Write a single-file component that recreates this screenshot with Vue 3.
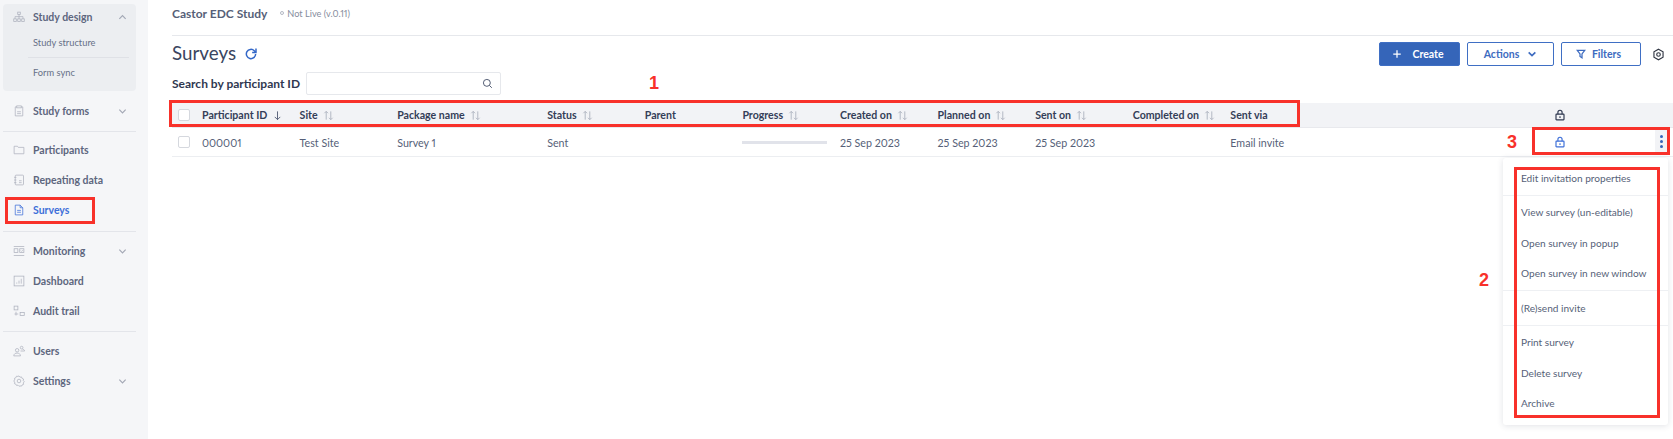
<template>
  <div class="page">
    <aside class="sidebar">
      <div class="group">
        <div class="nav-item head">
          <svg class="icon" viewBox="0 0 16 16" v-html="icons.tree"></svg>
          <span class="label">Study design</span>
          <svg class="chev" viewBox="0 0 10 6"><path d="M1.500 5 5 1.500 8.500 5" /></svg>
        </div>
        <div class="sub-item">Study structure</div>
        <div class="sub-line"></div>
        <div class="sub-item">Form sync</div>
      </div>

      <template v-for="(section, i) in navSections" :key="i">
        <div v-if="i > 0" class="nav-line" :class="`line-${i}`"></div>
        <div
          v-for="item in section"
          :key="item.name"
          class="nav-item"
          :class="{ active: item.name === 'Surveys' }"
        >
          <svg class="icon" viewBox="0 0 16 16" v-html="icons[item.icon]"></svg>
          <span class="label">{{ item.name }}</span>
          <svg v-if="item.more" class="chev" viewBox="0 0 10 6"><path d="M1.500 1.500 5 5 8.500 1.500" /></svg>
        </div>
      </template>
    </aside>

    <main class="main">
      <div class="topbar">
        <span class="study">Castor EDC Study</span>
        <span class="live"><i class="live-dot"></i>Not Live (v.0.11)</span>
      </div>

      <div class="title-row">
        <h1>Surveys</h1>
        <svg class="refresh" viewBox="0 0 16 16"><path d="M13.300 8a5.300 5.300 0 1 1-1.600-3.800L13.500 6" /><path d="M13.700 1.800v4.400H9.300" /></svg>
        <div class="actions">
          <button class="btn primary">
            <svg viewBox="0 0 12 12"><path d="M6 1.500v9M1.500 6h9" /></svg>
            Create
          </button>
          <button class="btn actions-btn">
            Actions
            <svg class="thick" viewBox="0 0 12 12"><path d="M2 4l4 4 4-4" /></svg>
          </button>
          <button class="btn filters-btn">
            <svg viewBox="0 0 12 12"><path d="M1.500 1.500h9L7.200 6v4.500L4.800 9V6z" /></svg>
            Filters
          </button>
          <svg class="gear" viewBox="0 0 16 16">
            <path d="M8 1.500l5.600 3.200v6.600L8 14.500l-5.600-3.200V4.700z" />
            <circle cx="8" cy="8" r="2.200" />
          </svg>
        </div>
      </div>

      <div class="search-row">
        <label>Search by participant ID</label>
        <div class="search-box">
          <svg viewBox="0 0 14 14"><circle cx="6.200" cy="6.200" r="4.400" /><path d="M9.500 9.500l3 3" /></svg>
        </div>
      </div>

      <div class="table">
        <div class="tr thead">
          <div class="check-cell"><span class="check"></span></div>
          <div v-for="col in columns" :key="col.name" class="cell">
            {{ col.name }}
            <svg v-if="col.sort === 'down'" class="sort active-sort" viewBox="0 0 12 12"><path d="M6 1.500v9M3 7.500l3 3 3-3" /></svg>
            <svg v-else-if="col.sort" class="sort" viewBox="0 0 12 12"><path d="M3.500 10.500v-9M1.500 3.500l2-2 2 2M8.500 1.500v9M6.500 8.500l2 2 2-2" /></svg>
          </div>
          <div class="lock-cell">
            <svg class="lock" viewBox="0 0 12 14" v-html="lockIcon"></svg>
          </div>
        </div>
        <div class="tr tbody">
          <div class="check-cell"><span class="check"></span></div>
          <div v-for="(value, i) in rowValues" :key="i" class="cell">
            <div v-if="value === 'progress'" class="progress"></div>
            <template v-else>{{ value }}</template>
          </div>
          <div class="lock-cell">
            <svg class="lock blue" viewBox="0 0 12 14" v-html="lockIcon"></svg>
            <div class="dots"><i></i><i></i><i></i></div>
          </div>
        </div>
      </div>
    </main>

    <div class="menu">
      <template v-for="(group, i) in menuGroups" :key="i">
        <div v-if="i > 0" class="menu-line"></div>
        <div class="menu-group">
          <div v-for="entry in group" :key="entry" class="menu-item">{{ entry }}</div>
        </div>
      </template>
    </div>

    <div class="mark mark-surveys"></div>
    <div class="mark mark-header"></div>
    <div class="mark mark-lock"></div>
    <div class="mark mark-menu"></div>
    <span class="num num-1">1</span>
    <span class="num num-2">2</span>
    <span class="num num-3">3</span>
  </div>
</template>

<script setup>
const icons = {
  tree: '<rect x="6.300" y="1.500" width="3.400" height="3" /><rect x="1" y="10.500" width="3.400" height="3.500" /><rect x="6.300" y="10.500" width="3.400" height="3.500" /><rect x="11.600" y="10.500" width="3.400" height="3.500" /><path d="M8 4.500v6M2.700 10.500V7.500h10.600v3" />',
  forms: '<path d="M5 2.500H3v12h10v-12h-2" /><rect x="5" y="1.200" width="6" height="2.600" /><path d="M5.500 9h5M5.500 11.500h5" />',
  folder: '<path d="M1.500 3h4.500l1 1.500h7.500v8.500h-13z" />',
  repeating: '<rect x="3" y="1.500" width="11" height="13" rx="1" /><path d="M1.500 4.500h3M1.500 8h3M1.500 11.500h3M8 9h3.500M8 11.500h3.500" />',
  survey: '<path d="M3 1.500h6.500l3.500 3.500v9.500H3z" /><path d="M9.500 1.500V5H13M5.500 8.500h5M5.500 11h5" />',
  monitoring: '<path d="M1 2h14M1 14h14" /><rect x="1.500" y="5" width="5" height="5" /><rect x="9" y="5" width="5.500" height="5" /><path d="M10.500 7.500l1 1 1.500-1.500" />',
  dashboard: '<rect x="1.500" y="1.500" width="13" height="13" /><path d="M5 11.500v-1.500M8 11.500v-4M11 11.500v-6.500" />',
  audit: '<rect x="1.500" y="1.500" width="5" height="5" /><path d="M4 9v5M2 12h5" /><rect x="9.500" y="10" width="5.500" height="4" />',
  users: '<circle cx="5.500" cy="7" r="2.300" /><path d="M1 14.500c.4-2.800 2-3.700 4.500-3.700s4.100.9 4.500 3.700z" /><circle cx="11.500" cy="3.500" r="1.800" /><path d="M10 8h5.500c-.2-1.500-1.200-2.200-2.700-2.200" />',
  settings: '<path d="M8 1.200l1.300 1.700 2.100-.3.700 2 2 .8-.4 2.100 1.400 1.500-1.400 1.500.4 2-2 .8-.7 1.500-2.100-.2L8 15l-1.300-1.400-2.100.2-.7-1.500-2-.8.4-2L.900 8l1.400-1.500-.4-2.100 2-.8.700-2 2.100.3z" /><circle cx="8" cy="8" r="2.400" />',
}

const lockIcon = '<path d="M3.500 6V3.800a2.500 2.500 0 0 1 5 0V6" /><rect x="1.200" y="6" width="9.600" height="6.800" rx=".6" /><path d="M6 8.500v2" />'

const navSections = [
  [{ name: 'Study forms', icon: 'forms', more: true }],
  [
    { name: 'Participants', icon: 'folder' },
    { name: 'Repeating data', icon: 'repeating' },
    { name: 'Surveys', icon: 'survey' },
  ],
  [
    { name: 'Monitoring', icon: 'monitoring', more: true },
    { name: 'Dashboard', icon: 'dashboard' },
    { name: 'Audit trail', icon: 'audit' },
  ],
  [
    { name: 'Users', icon: 'users' },
    { name: 'Settings', icon: 'settings', more: true },
  ],
]

const columns = [
  { name: 'Participant ID', sort: 'down' },
  { name: 'Site', sort: true },
  { name: 'Package name', sort: true },
  { name: 'Status', sort: true },
  { name: 'Parent' },
  { name: 'Progress', sort: true },
  { name: 'Created on', sort: true },
  { name: 'Planned on', sort: true },
  { name: 'Sent on', sort: true },
  { name: 'Completed on', sort: true },
  { name: 'Sent via' },
]

const rowValues = [
  '000001', 'Test Site', 'Survey 1', 'Sent', '', 'progress',
  '25 Sep 2023', '25 Sep 2023', '25 Sep 2023', '', 'Email invite',
]

const menuGroups = [
  ['Edit invitation properties'],
  ['View survey (un-editable)', 'Open survey in popup', 'Open survey in new window'],
  ['(Re)send invite'],
  ['Print survey', 'Delete survey', 'Archive'],
]
</script>

<style>
html, body {
  margin: 0;
  background: #fff;
}
</style>

<style scoped>
.page {
  position: relative;
  display: flex;
  width: 1673px;
  height: 439px;
  overflow: hidden;
  font-family: Lato, "Liberation Sans", sans-serif;
  font-variant-numeric: proportional-nums;
  color: #3f4a63;
}

.sidebar {
  width: 148px;
  flex: none;
  box-sizing: border-box;
  padding: 4px 12px 0 3px;
  background: #f5f6f8;
}

.group {
  height: 87px;
  margin-bottom: 5px;
  background: #eceef1;
  border-radius: 4px;
}

.nav-item {
  display: flex;
  align-items: center;
  height: 30px;
  padding-left: 10px;
  font-size: 10.500px;
  font-weight: 700;
  color: #5d667e;
}
.nav-item.head {
  height: 26px;
}
.nav-item.active {
  color: #3d6fd8;
}
.nav-item.active .icon {
  stroke: #3d6fd8;
}

.icon {
  width: 12px;
  height: 12px;
  flex: none;
  fill: none;
  stroke: #adb1bd;
  stroke-width: 1;
  margin-right: 8px;
}
.label {
  flex: 1;
}
.chev {
  width: 9px;
  height: 6px;
  margin-right: 9px;
  fill: none;
  stroke: #a3a8b5;
  stroke-width: 1.300;
}

.sub-item {
  height: 26px;
  line-height: 26px;
  padding-left: 30px;
  font-size: 9.300px;
  color: #667087;
}
.sub-line {
  height: 1px;
  margin: 1px 7px 2px 25px;
  background: #dfe1e6;
}

.nav-line {
  height: 1px;
  margin: 5px 0 4px;
  background: #e3e5ea;
}
.nav-line.line-1 {
  margin: 5px 0 3px;
}
.nav-line.line-2 {
  margin: 6px 0 4px;
}

.main {
  flex: 1;
  min-width: 0;
  padding-left: 24px;
}

.topbar {
  display: flex;
  align-items: center;
  height: 26px;
  padding-bottom: 9px;
  border-bottom: 1px solid #e6e8ec;
}
.study {
  font-size: 12px;
  font-weight: 700;
  color: #565f78;
}
.live {
  display: flex;
  align-items: center;
  margin-left: 13px;
  font-size: 9.200px;
  color: #858c9d;
}
.live-dot {
  width: 2px;
  height: 2px;
  margin-right: 3px;
  border: 1px solid #b4b9c4;
  border-radius: 50%;
}

.title-row {
  display: flex;
  align-items: center;
  height: 36px;
}
h1 {
  margin: -3px 0 0;
  font-size: 18.800px;
  font-weight: 400;
  color: #3a4560;
}
.refresh {
  width: 14px;
  height: 14px;
  margin-left: 8px;
  fill: none;
  stroke: #3468c8;
  stroke-width: 1.700;
}
.actions {
  display: flex;
  align-items: center;
  gap: 7px;
  margin-left: auto;
  padding-right: 8px;
}
.btn {
  display: flex;
  align-items: center;
  justify-content: center;
  height: 24px;
  box-sizing: border-box;
  border: 1px solid #3f6fc4;
  border-radius: 2px;
  background: #fff;
  color: #3d6bc0;
  font-family: inherit;
  font-size: 10.500px;
  font-weight: 700;
  padding: 0;
}
.btn svg {
  width: 10px;
  height: 10px;
  fill: none;
  stroke: currentColor;
  stroke-width: 1.500;
}
.btn svg.thick {
  stroke-width: 2;
}
.btn.primary {
  width: 81px;
  gap: 10px;
  padding-right: 3px;
  background: #3565b9;
  color: #fff;
}
.actions-btn {
  width: 87px;
  gap: 8px;
}
.filters-btn {
  width: 80px;
  gap: 6px;
  padding-right: 5px;
}
.gear {
  width: 13px;
  height: 13px;
  margin-left: 4px;
  fill: none;
  stroke: #2f3542;
  stroke-width: 1.400;
}

.search-row {
  display: flex;
  align-items: center;
  height: 23px;
  margin-bottom: 8px;
}
.search-row label {
  width: 134px;
  font-size: 12px;
  font-weight: 700;
  color: #2f3850;
}
.search-box {
  display: flex;
  align-items: center;
  justify-content: flex-end;
  width: 195px;
  height: 23px;
  box-sizing: border-box;
  padding-right: 7px;
  border: 1px solid #e6e8ec;
  border-radius: 2px;
}
.search-box svg {
  width: 11px;
  height: 11px;
  fill: none;
  stroke: #48536b;
  stroke-width: 1.200;
}

.tr {
  display: grid;
  grid-template-columns: 30px 97.600px 97.600px 150px repeat(6, 97.600px) 97.600px 304px 1fr;
  align-items: center;
}
.thead {
  height: 24px;
  background: #f2f3f6;
  border-bottom: 1px solid #e8e9ed;
  font-size: 10.600px;
  font-weight: 700;
  color: #343e58;
}
.tbody {
  height: 28px;
  border-bottom: 1px solid #eceef1;
  font-size: 10.700px;
  color: #565f78;
}
.check-cell {
  display: flex;
  padding-left: 6px;
}
.check {
  width: 12px;
  height: 12px;
  box-sizing: border-box;
  border: 1px solid #d5d8de;
  border-radius: 2px;
  background: #fff;
}
.cell {
  display: flex;
  align-items: center;
  white-space: nowrap;
}
.sort {
  width: 11px;
  height: 11px;
  margin-left: 5px;
  fill: none;
  stroke: #adb2be;
  stroke-width: 1;
}
.active-sort {
  stroke: #505a72;
}
.progress {
  width: 85px;
  height: 3px;
  background: #e1e3ea;
}

.lock-cell {
  position: relative;
  height: 100%;
  display: flex;
  align-items: center;
  padding-left: 21px;
}
.lock {
  width: 10px;
  height: 12px;
  fill: none;
  stroke: #2f3850;
  stroke-width: 1.400;
}
.lock.blue {
  stroke: #3d6fd8;
}
.dots {
  position: absolute;
  right: 6px;
  top: 0;
  bottom: 1px;
  width: 12px;
  display: flex;
  flex-direction: column;
  align-items: center;
  justify-content: center;
  gap: 2px;
  background: #f2f3f6;
}
.dots i {
  width: 3px;
  height: 3px;
  border-radius: 50%;
  background: #3565b9;
}

.menu {
  position: absolute;
  left: 1503px;
  top: 158px;
  width: 165px;
  height: 267px;
  box-sizing: border-box;
  background: #fff;
  border-radius: 3px;
  box-shadow: 0 1px 6px rgba(40, 50, 80, 0.14);
  font-size: 10.100px;
  color: #565f78;
}
.menu-group {
  padding: 1.500px 0;
}
.menu-group:first-child {
  padding-top: 4.500px;
}
.menu-item {
  height: 30.500px;
  line-height: 30.500px;
  padding-left: 18px;
  white-space: nowrap;
}
.menu-line {
  height: 1px;
  background: #eef0f3;
}

.mark {
  position: absolute;
  box-sizing: border-box;
  border: 3px solid #f8312a;
}
.mark-surveys {
  left: 5px;
  top: 197px;
  width: 90px;
  height: 27px;
}
.mark-header {
  left: 169px;
  top: 100px;
  width: 1131px;
  height: 27px;
}
.mark-lock {
  left: 1532px;
  top: 127px;
  width: 138px;
  height: 28px;
}
.mark-menu {
  left: 1514px;
  top: 167px;
  width: 146px;
  height: 251px;
}
.num {
  position: absolute;
  font-family: "Liberation Sans", sans-serif;
  font-size: 18px;
  font-weight: 700;
  line-height: 18px;
  color: #f8312a;
}
.num-1 { left: 649px; top: 74px; }
.num-2 { left: 1479px; top: 271px; }
.num-3 { left: 1507px; top: 133px; }
</style>
